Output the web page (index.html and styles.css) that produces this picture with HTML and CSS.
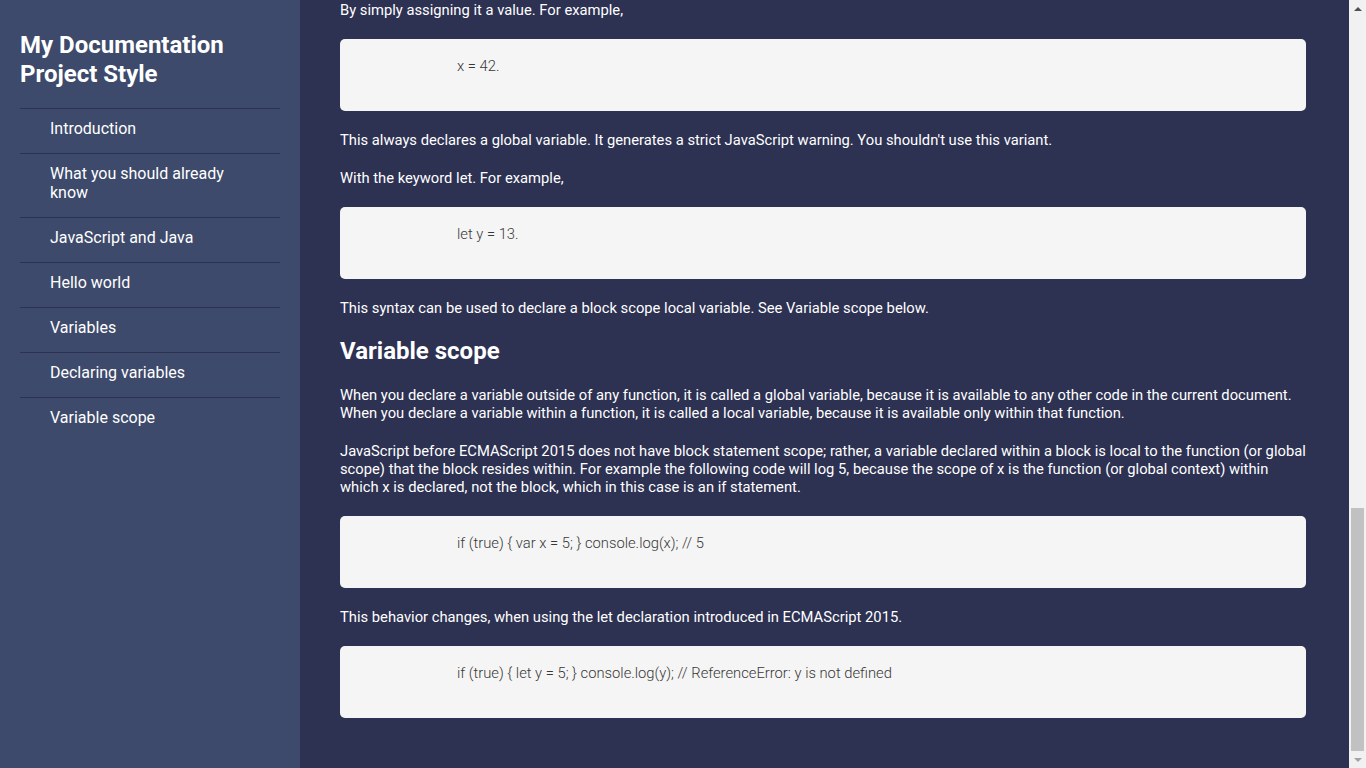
FILE: index.html
```html
<!DOCTYPE html>
<html lang="en">
<head>
<meta charset="utf-8">
<title>My Documentation Project Style</title>
<link rel="stylesheet" href="styles.css">
</head>
<body>
<div class="page">
  <nav class="sidebar" id="navbar">
    <h1 class="brand">My Documentation Project Style</h1>
    <ul class="nav-list">
      <li><a class="nav-link" href="#Introduction">Introduction</a></li>
      <li><a class="nav-link" href="#What_you_should_already_know">What you should already know</a></li>
      <li><a class="nav-link" href="#JavaScript_and_Java">JavaScript and Java</a></li>
      <li><a class="nav-link" href="#Hello_world">Hello world</a></li>
      <li><a class="nav-link" href="#Variables">Variables</a></li>
      <li><a class="nav-link" href="#Declaring_variables">Declaring variables</a></li>
      <li><a class="nav-link" href="#Variable_scope">Variable scope</a></li>
    </ul>
  </nav>
  <main class="content" id="main-doc">
    <section class="doc-section" id="Declaring_variables">
      <p class="first">By simply assigning it a value. For example,</p>
      <div class="code-block"><code>x = 42.</code></div>
      <p>This always declares a global variable. It generates a strict JavaScript warning. You shouldn't use this variant.</p>
      <p>With the keyword let. For example,</p>
      <div class="code-block"><code>let y = 13.</code></div>
      <p>This syntax can be used to declare a block scope local variable. See Variable scope below.</p>
    </section>
    <section class="doc-section" id="Variable_scope">
      <h2 class="section-title">Variable scope</h2>
      <p>When you declare a variable outside of any function, it is called a global variable, because it is available to any other code in the current document. When you declare a variable within a function, it is called a local variable, because it is available only within that function.</p>
      <p>JavaScript before ECMAScript 2015 does not have block statement scope; rather, a variable declared within a block is local to the function (or global scope) that the block resides within. For example the following code will log 5, because the scope of x is the function (or global context) within which x is declared, not the block, which in this case is an if statement.</p>
      <div class="code-block"><code>if (true) { var x = 5; } console.log(x); // 5</code></div>
      <p>This behavior changes, when using the let declaration introduced in ECMAScript 2015.</p>
      <div class="code-block"><code>if (true) { let y = 5; } console.log(y); // ReferenceError: y is not defined</code></div>
    </section>
  </main>
  <div class="scrollbar" aria-hidden="true">
    <div class="sb-btn"><span class="sb-arrow sb-up"></span></div>
    <div class="sb-track"><div class="sb-thumb"></div></div>
    <div class="sb-btn"><span class="sb-arrow sb-down"></span></div>
  </div>
</div>
</body>
</html>
```

FILE: styles.css
```css
html, body {
  margin: 0;
  padding: 0;
  height: 100%;
  overflow: hidden;
}

body {
  background: #2d3152;
  color: #ffffff;
  font-family: Roboto, "Liberation Sans", sans-serif;
  font-size: 14.75px;
  line-height: 18px;
}

.page {
  display: grid;
  grid-template-columns: 300px 1fr 17px;
  height: 100vh;
}

.sidebar {
  background: #3d4a6b;
  padding: 0 20px;
  overflow: hidden;
}

.brand {
  margin: 31px 0 19px;
  font-size: 24px;
  line-height: 29px;
  font-weight: 700;
  color: #ffffff;
}

.nav-list {
  list-style: none;
  margin: 0;
  padding: 0;
}

.nav-list li {
  border-top: 1px solid #2d3152;
}

.nav-link {
  display: block;
  padding: 10px 30px 15px;
  font-size: 16px;
  line-height: 19px;
  color: #ffffff;
  text-decoration: none;
}

.content {
  padding: 1px 43px 0 40px;
  min-width: 0;
  overflow: hidden;
}

.doc-section p {
  margin: 20px 0;
}

.doc-section p.first {
  margin-top: 0;
}

.section-title {
  margin: 20px 0;
  font-size: 24px;
  line-height: 29px;
  font-weight: 700;
}

.code-block {
  background: #f5f5f5;
  border-radius: 5px;
  margin: 20px 0;
  padding: 18px 20px 36px 117px;
  line-height: 18px;
}

.code-block code {
  font-family: Roboto, "Liberation Sans", sans-serif;
  font-size: 14.75px;
  font-weight: 300;
  color: #383838;
}

.scrollbar {
  background: #f1f1f1;
  display: flex;
  flex-direction: column;
}

.sb-btn {
  height: 17px;
  flex: none;
  display: flex;
  align-items: center;
  justify-content: center;
}

.sb-arrow {
  width: 0;
  height: 0;
  border-left: 4px solid transparent;
  border-right: 4px solid transparent;
}

.sb-up {
  border-bottom: 4px solid #505050;
}

.sb-down {
  border-top: 4px solid #a3a3a3;
}

.sb-track {
  flex: 1;
  display: flex;
  flex-direction: column;
  justify-content: flex-end;
  padding: 0 2px;
}

.sb-thumb {
  height: 243px;
  background: #c1c1c1;
}
```
